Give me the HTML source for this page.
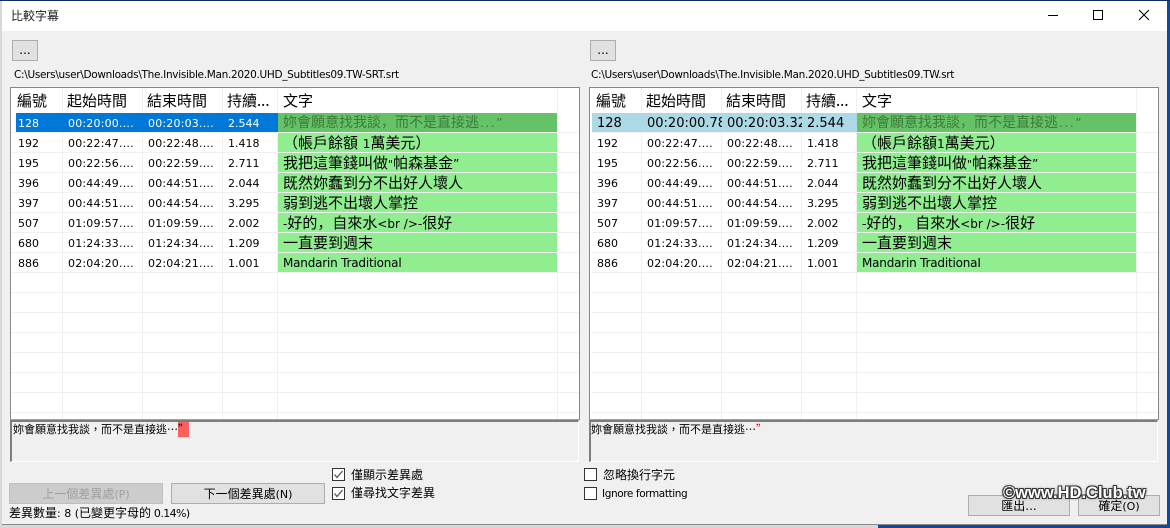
<!DOCTYPE html>
<html>
<head>
<meta charset="utf-8">
<style>
html,body{margin:0;padding:0;width:1170px;height:528px;overflow:hidden;background:#0c4a9e;}
*{box-sizing:border-box;}
div,span{position:absolute;white-space:nowrap;}
i{font-style:normal;font-family:"DejaVu Sans",sans-serif;font-size:12px;position:static;}
.s{font-size:11px;}
.q{letter-spacing:1.6px;margin-left:1px;}
#win{left:2px;top:1px;width:1165px;height:524px;background:#f0f0f0;overflow:hidden;}
#bgl{left:0;top:0;width:878px;height:528px;background:#d8d8d8;}
#bgtop{left:0;top:0;width:1170px;height:1px;background:#0d2f66;}
#title{left:0;top:0;width:1165px;height:30px;background:#fff;}
body{font-family:"DejaVu Sans","WenQuanYi Zen Hei","Noto Sans CJK TC",sans-serif;font-size:11px;color:#000;}
.cj{font-family:"WenQuanYi Zen Hei","Noto Sans CJK TC",sans-serif;}
.btn{background:#e1e1e1;border:1px solid #adadad;text-align:center;font:12px "WenQuanYi Zen Hei","DejaVu Sans",sans-serif;}
.tbl{width:570px;height:333px;background:#fff;border:1px solid #82878c;border-bottom-color:#a0a0a0;overflow:hidden;}
.h{top:1px;height:23px;font:15px/24px "WenQuanYi Zen Hei","Noto Sans CJK TC",sans-serif;overflow:hidden;}
.vl{top:0;width:1px;height:333px;background:#f0f0f0;}
.hl{left:1px;width:570px;height:1px;background:#f0f0f0;}
.r{left:1px;width:546px;height:19px;}
.a,.b,.c,.d,.e{top:0;height:19px;line-height:21px;overflow:hidden;}
.a{left:6px;width:44px;}.b{left:56px;width:75px;letter-spacing:.2px;}.c{left:136px;width:75px;letter-spacing:.2px;}.d{left:216px;width:50px;}
.e{left:266px;width:279px;background:#90ee90;padding-left:5px;font:15px/21px "WenQuanYi Zen Hei","DejaVu Sans",sans-serif;position:absolute;}
.e.l{font:12px/21px "DejaVu Sans",sans-serif;letter-spacing:-.2px;}
.sel{background:#0078d7;color:#fff;left:4px;width:262px;height:19px;}
.sel2{background:#add8e6;left:1px;width:265px;height:19px;}
.big .a,.big .b,.big .c,.big .d{font-size:13px;letter-spacing:0;}
.first{background:#66c266!important;color:#3c7a3c;font-size:14px!important;}
.box{background:#f0f0f0;border-top:2px solid #7d7d7d;border-left:2px solid #7d7d7d;border-right:1px solid #fff;border-bottom:1px solid #fff;height:42px;width:569px;font:11px/14px "WenQuanYi Zen Hei","Noto Sans CJK TC",sans-serif;}
.chk{width:13px;height:13px;background:#fff;border:1px solid #333;}
.lbl{font:12px/16px "WenQuanYi Zen Hei","DejaVu Sans",sans-serif;}
.path{line-height:16px;font-size:10.5px;letter-spacing:-.31px;}
.wm{font-family:"Liberation Sans",sans-serif;font-weight:bold;font-size:16.5px;color:#fff;text-shadow:-1px -1px 0 #333,1px -1px 0 #333,-1px 1px 0 #333,1px 1px 0 #333,0 0 3px #333;}
</style>
</head>
<body>
<div id="bgl"></div>
<div style="left:878px;top:0;width:292px;height:528px;background:#0c4a9e"></div>
<div id="bgtop"></div>
<div id="win" style="border-bottom:1px solid #8a8a8a;">
  <div id="title"></div>
  <div class="cj" style="left:9px;top:7px;font-size:12px;line-height:16px;color:#222;">比較字幕</div>
  <svg style="position:absolute;left:1045px;top:4px" width="115" height="20">
    <path d="M1 10.5H11" stroke="#000" fill="none"/>
    <rect x="46.5" y="5.5" width="9" height="9" stroke="#000" fill="none"/>
    <path d="M92 5L102 15M102 5L92 15" stroke="#000" fill="none"/>
  </svg>

  <div class="btn" style="left:10px;top:39px;width:26px;height:21px;line-height:18px;">...</div>
  <div class="btn" style="left:588px;top:39px;width:26px;height:21px;line-height:18px;">...</div>
  <div class="path" style="left:12px;top:66px;">C:\Users\user\Downloads\The.Invisible.Man.2020.UHD_Subtitles09.TW-SRT.srt</div>
  <div class="path" style="left:589px;top:66px;">C:\Users\user\Downloads\The.Invisible.Man.2020.UHD_Subtitles09.TW.srt</div>

  <!-- LEFT TABLE -->
  <div class="tbl" style="left:8px;top:86px;">
    <div class="hl" style="top:44px"></div><div class="hl" style="top:64px"></div><div class="hl" style="top:84px"></div><div class="hl" style="top:104px"></div><div class="hl" style="top:124px"></div><div class="hl" style="top:144px"></div><div class="hl" style="top:164px"></div><div class="hl" style="top:184px"></div><div class="hl" style="top:204px"></div><div class="hl" style="top:224px"></div><div class="hl" style="top:244px"></div><div class="hl" style="top:264px"></div><div class="hl" style="top:284px"></div><div class="hl" style="top:304px"></div><div class="hl" style="top:324px"></div>
    <div class="vl" style="left:51px"></div><div class="vl" style="left:131px"></div><div class="vl" style="left:211px"></div><div class="vl" style="left:266px"></div><div class="vl" style="left:546px"></div>
    <div class="h" style="left:6px">編號</div><div class="h" style="left:56px">起始時間</div><div class="h" style="left:136px">結束時間</div><div class="h" style="left:216px;width:50px">持續...</div><div class="h" style="left:272px">文字</div>

    <div class="r" style="top:25px"><div class="sel"></div><div class="a" style="color:#fff">128</div><div class="b" style="color:#fff">00:20:00....</div><div class="c" style="color:#fff">00:20:03....</div><div class="d" style="color:#fff">2.544</div><div class="e first">妳會願意找我談，而不是直接逃<i class="q">...”</i></div></div>
    <div class="r" style="top:45px"><div class="a">192</div><div class="b">00:22:47....</div><div class="c">00:22:48....</div><div class="d">1.418</div><div class="e">（帳戶餘額 <i>1</i>萬美元）</div></div>
    <div class="r" style="top:65px"><div class="a">195</div><div class="b">00:22:56....</div><div class="c">00:22:59....</div><div class="d">2.711</div><div class="e">我把這筆錢叫做<i class="s">"</i>帕森基金<i>”</i></div></div>
    <div class="r" style="top:85px"><div class="a">396</div><div class="b">00:44:49....</div><div class="c">00:44:51....</div><div class="d">2.044</div><div class="e">既然妳蠢到分不出好人壞人</div></div>
    <div class="r" style="top:105px"><div class="a">397</div><div class="b">00:44:51....</div><div class="c">00:44:54....</div><div class="d">3.295</div><div class="e">弱到逃不出壞人掌控</div></div>
    <div class="r" style="top:125px"><div class="a">507</div><div class="b">01:09:57....</div><div class="c">01:09:59....</div><div class="d">2.002</div><div class="e"><i>-</i>好的，自來水<i>&lt;br /&gt;-</i>很好</div></div>
    <div class="r" style="top:145px"><div class="a">680</div><div class="b">01:24:33....</div><div class="c">01:24:34....</div><div class="d">1.209</div><div class="e">一直要到週末</div></div>
    <div class="r" style="top:165px"><div class="a">886</div><div class="b">02:04:20....</div><div class="c">02:04:21....</div><div class="d">1.001</div><div class="e l">Mandarin Traditional</div></div>
  </div>

  <!-- RIGHT TABLE -->
  <div class="tbl" style="left:587px;top:86px;">
    <div class="hl" style="top:44px"></div><div class="hl" style="top:64px"></div><div class="hl" style="top:84px"></div><div class="hl" style="top:104px"></div><div class="hl" style="top:124px"></div><div class="hl" style="top:144px"></div><div class="hl" style="top:164px"></div><div class="hl" style="top:184px"></div><div class="hl" style="top:204px"></div><div class="hl" style="top:224px"></div><div class="hl" style="top:244px"></div><div class="hl" style="top:264px"></div><div class="hl" style="top:284px"></div><div class="hl" style="top:304px"></div><div class="hl" style="top:324px"></div>
    <div class="vl" style="left:51px"></div><div class="vl" style="left:131px"></div><div class="vl" style="left:211px"></div><div class="vl" style="left:266px"></div><div class="vl" style="left:546px"></div>
    <div class="h" style="left:6px">編號</div><div class="h" style="left:56px">起始時間</div><div class="h" style="left:136px">結束時間</div><div class="h" style="left:216px;width:50px">持續...</div><div class="h" style="left:272px">文字</div>

    <div class="r big" style="top:25px"><div class="sel2"></div><div class="a">128</div><div class="b">00:20:00.78</div><div class="c">00:20:03.32</div><div class="d">2.544</div><div class="e first">妳會願意找我談，而不是直接逃<i class="q">...”</i></div></div>
    <div class="r" style="top:45px"><div class="a">192</div><div class="b">00:22:47....</div><div class="c">00:22:48....</div><div class="d">1.418</div><div class="e">（帳戶餘額<i>1</i>萬美元）</div></div>
    <div class="r" style="top:65px"><div class="a">195</div><div class="b">00:22:56....</div><div class="c">00:22:59....</div><div class="d">2.711</div><div class="e">我把這筆錢叫做<i class="s">"</i>帕森基金<i>”</i></div></div>
    <div class="r" style="top:85px"><div class="a">396</div><div class="b">00:44:49....</div><div class="c">00:44:51....</div><div class="d">2.044</div><div class="e">既然妳蠢到分不出好人壞人</div></div>
    <div class="r" style="top:105px"><div class="a">397</div><div class="b">00:44:51....</div><div class="c">00:44:54....</div><div class="d">3.295</div><div class="e">弱到逃不出壞人掌控</div></div>
    <div class="r" style="top:125px"><div class="a">507</div><div class="b">01:09:57....</div><div class="c">01:09:59....</div><div class="d">2.002</div><div class="e"><i>-</i>好的，<i> </i>自來水<i>&lt;br /&gt;-</i>很好</div></div>
    <div class="r" style="top:145px"><div class="a">680</div><div class="b">01:24:33....</div><div class="c">01:24:34....</div><div class="d">1.209</div><div class="e">一直要到週末</div></div>
    <div class="r" style="top:165px"><div class="a">886</div><div class="b">02:04:20....</div><div class="c">02:04:21....</div><div class="d">1.001</div><div class="e l">Mandarin TraditionaI</div></div>
  </div>

  <div class="box" style="left:8px;top:419px;padding-left:1px;">妳會願意找我談，而不是直接逃⋯<span style="position:static;background:#ff5f5f;display:inline-block;width:11px;height:15px;vertical-align:top;line-height:14px;">”</span></div>
  <div class="box" style="left:587px;top:419px;">妳會願意找我談，而不是直接逃⋯<span style="position:static;color:#f00000">”</span></div>

  <div class="btn" style="left:7px;top:482px;width:154px;height:21px;background:#cccccc;border-color:#bfbfbf;color:#a0a0a0;line-height:20px;">上一個差異處<i class="s">(P)</i></div>
  <div class="btn" style="left:169px;top:482px;width:154px;height:21px;line-height:20px;">下一個差異處<i class="s">(N)</i></div>

  <div class="chk" style="left:330px;top:467px;"></div>
  <svg style="position:absolute;left:330px;top:467px" width="13" height="13"><path d="M2.5 6.5L5 9.5L10.5 3" stroke="#555" stroke-width="1.3" fill="none"/></svg>
  <div class="chk" style="left:330px;top:486px;"></div>
  <svg style="position:absolute;left:330px;top:486px" width="13" height="13"><path d="M2.5 6.5L5 9.5L10.5 3" stroke="#555" stroke-width="1.3" fill="none"/></svg>
  <div class="lbl" style="left:349px;top:466px;">僅顯示差異處</div>
  <div class="lbl" style="left:349px;top:484px;">僅尋找文字差異</div>

  <div class="chk" style="left:582px;top:467px;"></div>
  <div class="chk" style="left:582px;top:486px;"></div>
  <div class="lbl" style="left:601px;top:466px;">忽略換行字元</div>
  <div style="left:600px;top:485px;line-height:16px;font-size:10.5px;letter-spacing:-.4px;">Ignore formatting</div>

  <div class="lbl" style="left:7px;top:504px;">差異數量<i class="s">: 8 (</i>已變更字母的<i class="s" style="letter-spacing:-.6px"> 0.14%)</i></div>

  <div class="btn" style="left:966px;top:494px;width:102px;height:21px;line-height:20px;">匯出...</div>
  <div class="btn" style="left:1076px;top:494px;width:82px;height:21px;line-height:20px;">確定<i class="s">(O)</i></div>
  <div class="wm" style="left:1001px;top:481px;line-height:22px;">©www.HD.Club.tw</div>
</div>
</body>
</html>
